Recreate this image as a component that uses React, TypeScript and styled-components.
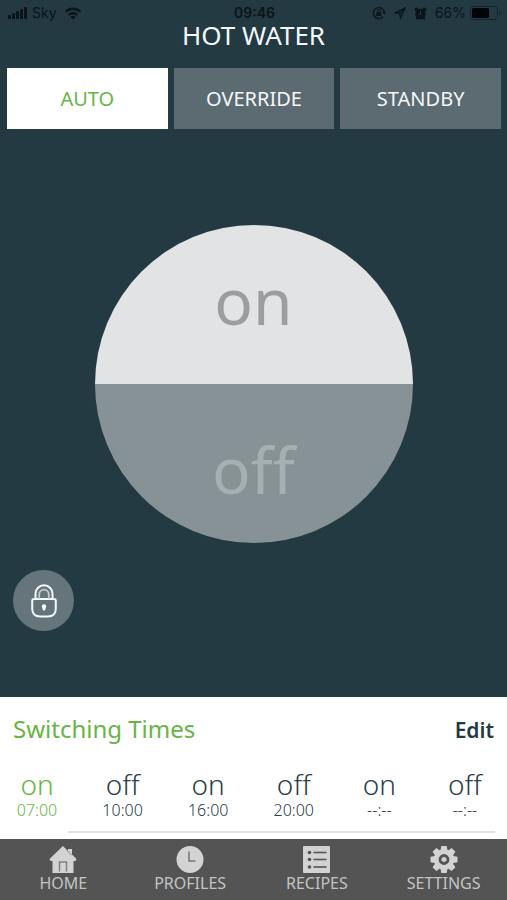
import React, { useState } from "react";
import styled, { createGlobalStyle } from "styled-components";

const GlobalStyle = createGlobalStyle`
  * { box-sizing: border-box; }
  body { margin: 0; background: #243a43; }
  button { font: inherit; border: 0; margin: 0; padding: 0; cursor: pointer; }
`;

const Screen = styled.div`
  display: flex;
  flex-direction: column;
  min-height: 100vh;
  background: #243a43;
  color: #f4f8fa;
  font-family: "Noto Sans", "Open Sans", sans-serif;
`;

const StatusBar = styled.div`
  display: grid;
  grid-template-columns: 1fr auto 1fr;
  align-items: center;
  height: 26px;
  padding: 0 6px 0 8px;
  color: #0a1419;
  font: 14px/26px Inter, "Liberation Sans", sans-serif;
`;

const StatusGroup = styled.div<{ $end?: boolean }>`
  display: flex;
  align-items: center;
  justify-content: ${(p) => (p.$end ? "flex-end" : "flex-start")};
  gap: ${(p) => (p.$end ? 8 : 4)}px;
  svg { display: block; flex: none; }
`;

const Charge = styled.div`
  display: flex;
  align-items: center;
  gap: 4px;
`;

const Clock = styled.time`
  font-weight: 600;
`;

const Title = styled.h1`
  margin: 0;
  height: 42px;
  font-size: 26px;
  line-height: 18px;
  font-weight: 400;
  text-align: center;
`;

const Modes = styled.div`
  display: grid;
  grid-template-columns: repeat(3, 1fr);
  gap: 6px;
  padding: 0 6px 0 7px;
`;

const ModeButton = styled.button<{ $active: boolean }>`
  height: 61px;
  font-size: 20px;
  color: ${(p) => (p.$active ? "#67b545" : "#f4f8fa")};
  background: ${(p) => (p.$active ? "#ffffff" : "#5c6a72")};
`;

const Stage = styled.main`
  flex: 1;
  display: flex;
  flex-direction: column;
  padding: 96px 13px 66px;
`;

const Dial = styled.div`
  display: grid;
  grid-template-rows: 1fr 1fr;
  align-self: center;
  width: 100%;
  max-width: 318px;
  aspect-ratio: 1;
  border-radius: 50%;
  overflow: hidden;
`;

const DialHalf = styled.button<{ $on?: boolean }>`
  font-size: 64px;
  line-height: 64px;
  padding-bottom: ${(p) => (p.$on ? 8 : 0)}px;
  padding-top: ${(p) => (p.$on ? 0 : 12)}px;
  color: ${(p) => (p.$on ? "#9c9e9e" : "#a5b0b2")};
  background: ${(p) => (p.$on ? "#e1e3e4" : "#879296")};
`;

const LockButton = styled.button`
  display: grid;
  place-items: center;
  width: 61px;
  height: 61px;
  margin-top: 27px;
  border-radius: 50%;
  background: #65757b;
`;

const Schedule = styled.section`
  height: 142px;
  background: #ffffff;
  color: #2b404a;
`;

const ScheduleHead = styled.div`
  display: flex;
  align-items: baseline;
  justify-content: space-between;
  height: 66px;
  padding: 15px 13px 0;
`;

const ScheduleTitle = styled.h2`
  margin: 0;
  font-size: 24px;
  line-height: 34px;
  font-weight: 400;
  color: #67b545;
`;

const EditButton = styled.button`
  background: none;
  color: #243a43;
  font-size: 21px;
  font-weight: 600;
`;

const Times = styled.ol`
  display: flex;
  justify-content: space-between;
  list-style: none;
  margin: 0;
  padding: 5px 19px 0 14px;
`;

const Slot = styled.li<{ $active: boolean }>`
  display: flex;
  flex-direction: column;
  align-items: center;
  width: 46px;
  color: ${(p) => (p.$active ? "#67b545" : "#2b404a")};
`;

const SlotState = styled.span`
  font-size: 28px;
  line-height: 32px;
  font-weight: 300;
`;

const SlotTime = styled.span`
  font-size: 16px;
  line-height: 20px;
  font-weight: 300;
`;

const Rule = styled.hr`
  height: 2px;
  border: 0;
  margin: 11px 12px 0 68px;
  background: #e0e1e2;
`;

const Nav = styled.nav`
  display: grid;
  grid-template-columns: repeat(4, 1fr);
  height: 61px;
  background: #545454;
`;

const NavLink = styled.a`
  display: flex;
  flex-direction: column;
  align-items: center;
  padding-top: 7px;
  color: #c4c4c4;
  font-size: 16px;
  line-height: 21px;
  text-decoration: none;
  svg { display: block; }
`;

const Signal = () => (
  <svg width="20" height="12" viewBox="0 0 20 12" fill="currentColor" aria-hidden="true">
    <rect x="0" y="8" width="3" height="4" rx="1" />
    <rect x="4" y="6" width="3" height="6" rx="1" />
    <rect x="8" y="4" width="3" height="8" rx="1" />
    <rect x="12" y="2" width="3" height="10" rx="1" />
    <rect x="16" y="0" width="3" height="12" rx="1" />
  </svg>
);

const Wifi = () => (
  <svg width="24" height="13" viewBox="0 0 24 13" fill="none" stroke="currentColor" strokeWidth="2.4" aria-hidden="true">
    <path d="M4.6 4.7a10.6 10.6 0 0 1 14.8 0" />
    <path d="M7.6 8a6.4 6.4 0 0 1 8.8 0" />
    <path d="M12 12.4 9.4 9.9a3.8 3.8 0 0 1 5.2 0z" fill="currentColor" stroke="none" />
  </svg>
);

const RotationLock = () => (
  <svg width="14" height="14" viewBox="0 0 14 14" fill="none" stroke="currentColor" strokeWidth="1.3" aria-hidden="true">
    <path d="M11 10.8A5.5 5.5 0 1 1 12.4 7" />
    <path d="M10.6 6h3.4l-1.7 2.4z" fill="currentColor" stroke="none" />
    <rect x="4.3" y="6.2" width="5" height="3.8" fill="currentColor" stroke="none" />
    <path d="M5.3 6.3V5.2a1.5 1.5 0 0 1 3 0v1.1" strokeWidth="1" />
  </svg>
);

const LocationArrow = () => (
  <svg width="12" height="12" viewBox="0 0 12 12" fill="none" stroke="currentColor" strokeWidth="1.3" aria-hidden="true">
    <path d="M11 1 1.2 5.8l4.4.6.8 4.6z" />
    <path d="M11 1 5.6 6.4" />
  </svg>
);

const Alarm = () => (
  <svg width="13" height="13" viewBox="0 0 13 13" aria-hidden="true">
    <g fill="currentColor">
      <circle cx="6.5" cy="7" r="5.2" />
      <circle cx="2.6" cy="2.6" r="2" />
      <circle cx="10.4" cy="2.6" r="2" />
      <path d="m2.600 10-1 2.600h1.600l1.600-1.600zM10.400 10l1 2.600H9.800l-1.600-1.600z" />
    </g>
    <path d="M6.5 4v3.200H4.500" fill="none" stroke="#243a43" strokeWidth="1" />
  </svg>
);

const Battery = () => (
  <svg width="31" height="14" viewBox="0 0 31 14" aria-hidden="true">
    <rect x="0.5" y="0.5" width="27" height="13" rx="3" fill="none" stroke="#15252c" />
    <rect x="2" y="2" width="17" height="10" rx="1.5" fill="#000608" />
    <path d="M29 4.5c2 1 2 4 0 5z" fill="#15252c" />
  </svg>
);

const Padlock = () => (
  <svg width="26" height="34" viewBox="0 0 26 34" fill="none" stroke="#f7fafb" strokeWidth="2" aria-hidden="true">
    <path d="M3.2 15h19.6q2 0 2 2v7.500q0 8-8 8H9.200q-8 0-8-8V17q0-2 2-2z" />
    <path d="M4.500 15V9.700a8.500 8.500 0 0 1 17 0V15" />
    <path d="M8.200 15v-4.500a4.800 4.800 0 0 1 9.600 0V15" strokeWidth="1.800" stroke="#c5ced2" />
    <path d="M13 20.200a2.200 2.200 0 0 1 1.900 3.300L14 26.500h-2l-.9-3A2.200 2.200 0 0 1 13 20.200z" fill="#f7fafb" stroke="none" />
  </svg>
);

const HomeIcon = () => (
  <svg width="28" height="27" viewBox="0 0 28 27" aria-hidden="true">
    <path d="M14 0 .5 13l1 2H3.500v12h21V15h2l1-2L23 8.500V3h-4v2z" fill="#d3d3d3" />
    <path d="M10.500 25.500v-9.500h7v9.500" fill="none" stroke="#808080" strokeWidth="1.500" />
    <path d="m18 4.500 4.500 4.500" stroke="#8b8b8b" />
  </svg>
);

const ClockIcon = () => (
  <svg width="28" height="27" viewBox="0 0 28 27" aria-hidden="true">
    <circle cx="14" cy="13.5" r="13.5" fill="#d3d3d3" />
    <path d="M13 5.5V15H19.5" fill="none" stroke="#777" strokeWidth="1.5" />
  </svg>
);

const ListIcon = () => (
  <svg width="27" height="27" viewBox="0 0 27 27" aria-hidden="true">
    <rect width="27" height="27" rx="1" fill="#d3d3d3" />
    {[6.5, 13.5, 21].map((y) => (
      <g key={y} fill="#545454">
        <circle cx="6.5" cy={y} r="1.8" />
        <rect x="10.5" y={y - 0.8} width="13" height="1.6" />
      </g>
    ))}
  </svg>
);

const GearIcon = () => (
  <svg width="28" height="27" viewBox="-14 -13.5 28 27" aria-hidden="true">
    <g fill="#d3d3d3">
      <circle r="10.2" />
      {[0, 45, 90, 135, 180, 225, 270, 315].map((angle) => (
        <path key={angle} d="M-3.5-9-2.7-13.5H2.7L3.5-9z" transform={`rotate(${angle})`} />
      ))}
    </g>
    <circle r="4" fill="#d3d3d3" stroke="#545454" strokeWidth="2.8" />
  </svg>
);

const modes = ["AUTO", "OVERRIDE", "STANDBY"];

const slots = [
  { state: "on", time: "07:00" },
  { state: "off", time: "10:00" },
  { state: "on", time: "16:00" },
  { state: "off", time: "20:00" },
  { state: "on", time: "--:--" },
  { state: "off", time: "--:--" },
];

const links = [
  { label: "HOME", Icon: HomeIcon },
  { label: "PROFILES", Icon: ClockIcon },
  { label: "RECIPES", Icon: ListIcon },
  { label: "SETTINGS", Icon: GearIcon },
];

export default function App() {
  const [mode, setMode] = useState("AUTO");
  return (
    <>
      <GlobalStyle />
      <Screen>
        <StatusBar>
          <StatusGroup>
            <Signal />
            <span>Sky</span>
            <Wifi />
          </StatusGroup>
          <Clock>09:46</Clock>
          <StatusGroup $end>
            <RotationLock />
            <LocationArrow />
            <Alarm />
            <Charge>
              <span>66%</span>
              <Battery />
            </Charge>
          </StatusGroup>
        </StatusBar>
        <Title>HOT WATER</Title>
        <Modes>
          {modes.map((m) => (
            <ModeButton key={m} type="button" $active={m === mode} aria-pressed={m === mode} onClick={() => setMode(m)}>
              {m}
            </ModeButton>
          ))}
        </Modes>
        <Stage>
          <Dial>
            <DialHalf type="button" $on>on</DialHalf>
            <DialHalf type="button">off</DialHalf>
          </Dial>
          <LockButton type="button" aria-label="Lock">
            <Padlock />
          </LockButton>
        </Stage>
        <Schedule>
          <ScheduleHead>
            <ScheduleTitle>Switching Times</ScheduleTitle>
            <EditButton type="button">Edit</EditButton>
          </ScheduleHead>
          <Times>
            {slots.map((slot, i) => (
              <Slot key={i} $active={i === 0}>
                <SlotState>{slot.state}</SlotState>
                <SlotTime>{slot.time}</SlotTime>
              </Slot>
            ))}
          </Times>
          <Rule />
        </Schedule>
        <Nav>
          {links.map(({ label, Icon }) => (
            <NavLink key={label} href={`#${label.toLowerCase()}`}>
              <Icon />
              {label}
            </NavLink>
          ))}
        </Nav>
      </Screen>
    </>
  );
}
